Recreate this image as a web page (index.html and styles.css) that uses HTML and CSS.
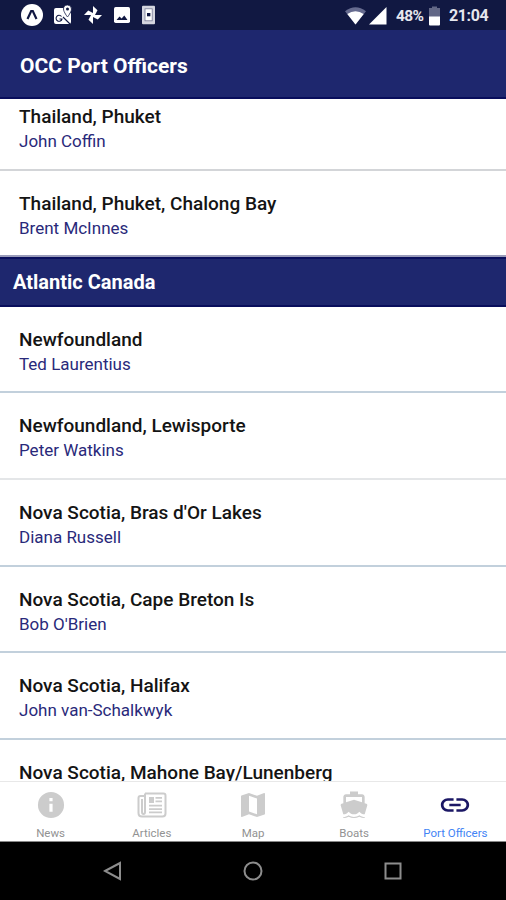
FILE: index.html
```html
<!DOCTYPE html>
<html lang="en">
<head>
<meta charset="utf-8">
<title>OCC Port Officers</title>
<link rel="stylesheet" href="styles.css">
</head>
<body>
<div class="screen">
  <div class="status">
    <div class="notices">
      <svg width="22" height="22" viewBox="0 0 22 22"><circle cx="11" cy="11" r="11" fill="#fff"/><path d="M6.5 15 10.2 7h1.6l3.7 8" fill="none" stroke="#111842" stroke-width="2.2"/></svg>
      <svg width="20" height="22" viewBox="0 0 20 22"><path d="M3 4h9l3 7 3-3v10q0 2-2 2H3q-2 0-2-2V6q0-2 2-2z" fill="#fff"/><path d="M8.5 12.5A3 3 0 1 0 9 15H6.5M10 13l7 7" fill="none" stroke="#111842" stroke-width="1.1"/><path d="M14.5 1a4 4 0 0 0-4 4c0 3 4 8 4 8s4-5 4-8a4 4 0 0 0-4-4z" fill="#fff" stroke="#111842" stroke-width=".8"/><circle cx="14.5" cy="5" r="1.5" fill="#111842"/></svg>
      <svg width="20" height="22" viewBox="0 0 20 22"><g fill="#fff"><path id="v" d="M10 11V2l4.5 4.2L12 11z"/><path d="M10 11h9l-4.2 4.5L10 13z"/><path d="M10 11v9l-4.5-4.2L8 11z"/><path d="M10 11H1l4.2-4.5L10 9z"/></g></svg>
      <svg width="18" height="22" viewBox="0 0 18 22"><rect x="1" y="3" width="16" height="16" rx="1.7" fill="#fff"/><path d="M3.5 16 6.5 12.5 8.6 14.6 11.3 11.5 14.5 16z" fill="#111842"/></svg>
      <svg width="15" height="22" viewBox="0 0 15 22"><rect x="1" y="1.7" width="13" height="18.5" rx="1" fill="#d4d5df"/><rect x="4" y="4.8" width="7.2" height="12" fill="#fff" stroke="#777b95" stroke-width=".8"/><path d="M6 9h3.4v3.3H6z" fill="#111842"/></svg>
    </div>
    <div class="system">
      <svg class="wifi" width="21" height="18" viewBox="0 0 21 18"><path d="M0 4.2Q10.5-3.9 21 4.2L10.5 17.5z" fill="#666b8f"/><path d="M2.3 7Q10.5 1.6 18.7 7l-8.2 10.5z" fill="#fff"/></svg>
      <svg class="signal" width="18" height="18" viewBox="0 0 18 18"><path d="M0 17.5 17.5 0v17.5z" fill="#fff"/></svg>
      <span class="percent">48%</span>
      <svg class="battery" width="11" height="20" viewBox="0 0 11 20"><path d="M3 .5h5V2h3v9H0V2h3z" fill="#626786"/><path d="M0 10.5h11v8q0 1-1 1H1q-1 0-1-1z" fill="#fff"/></svg>
      <span class="time">21:04</span>
    </div>
  </div>
  <header class="appbar"><h1>OCC Port Officers</h1></header>
  <main class="list">
    <div class="row"><div class="place">Thailand, Phuket</div><div class="name">John Coffin</div></div>
    <div class="row last"><div class="place">Thailand, Phuket, Chalong Bay</div><div class="name">Brent McInnes</div></div>
    <h2 class="region">Atlantic Canada</h2>
    <div class="row blue"><div class="place">Newfoundland</div><div class="name">Ted Laurentius</div></div>
    <div class="row pale"><div class="place">Newfoundland, Lewisporte</div><div class="name">Peter Watkins</div></div>
    <div class="row blue"><div class="place">Nova Scotia, Bras d'Or Lakes</div><div class="name">Diana Russell</div></div>
    <div class="row blue"><div class="place">Nova Scotia, Cape Breton Is</div><div class="name">Bob O'Brien</div></div>
    <div class="row blue"><div class="place">Nova Scotia, Halifax</div><div class="name">John van-Schalkwyk</div></div>
    <div class="row"><div class="place">Nova Scotia, Mahone Bay/Lunenberg</div></div>
  </main>
  <nav class="tabs">
    <div class="tab"><svg width="32" height="32" viewBox="0 0 24 24"><path d="M12 2.2a9.8 9.8 0 1 0 0 19.6 9.8 9.8 0 0 0 0-19.6zM13.2 17h-2.4v-6h2.4zm0-7.8h-2.4V6.8h2.4z"/></svg><span>News</span></div>
    <div class="tab"><svg width="32" height="32" viewBox="0 0 32 32"><g fill="none" stroke="#ccc" stroke-width="2"><path d="M9 4.5h18.5q2 0 2 2v18q0 3-3 3H6q-3.5 0-3.5-3.5V9q0-2 2-2H9M9 4.5V23q0 2-1.5 2T6 23V10"/></g><path d="M13 8h5v6h-5zm6.5 0H26v1.7h-6.5zm0 3.5H26v1.7h-6.5zM13 15.7h13v1.7H13zm0 3.5h13v1.7H13zm0 3.4h13v1.7H13z"/></svg><span>Articles</span></div>
    <div class="tab"><svg width="32" height="32" viewBox="0 0 24 24"><path d="M20.5 3l-.16.03L15 5.1 9 3 3.36 4.9c-.21.07-.36.25-.36.48V20.5c0 .28.22.5.5.5l.16-.03L9 18.9l6 2.1 5.64-1.9c.21-.07.36-.25.36-.48V3.500c0-.28-.22-.5-.5-.5zM15 19l-6-2.110V5l6 2.110V19z"/></svg><span>Map</span></div>
    <div class="tab"><svg width="32" height="32" viewBox="0 0 24 24"><path d="M20 21c-1.390 0-2.780-.47-4-1.320-2.440 1.710-5.560 1.710-8 0C6.780 20.530 5.390 21 4 21v.8c1.380 0 2.740-.35 4-.99 2.520 1.290 5.480 1.290 8 0 1.260.65 2.620.99 4 .99V21zM3.950 19H4c1.600 0 3.020-.88 4-2 .98 1.120 2.400 2 4 2s3.020-.88 4-2c.98 1.120 2.400 2 4 2h.05l1.890-6.680c.08-.26.06-.54-.06-.78s-.34-.42-.6-.5L20 10.620V6c0-1.100-.9-2-2-2h-3V1.800H9V4H6c-1.100 0-2 .9-2 2v4.620l-1.290.42c-.26.08-.48.26-.6.5s-.15.52-.06.78L3.950 19zM6 6h12v3.970L12 8 6 9.970V6z"/></svg><span>Boats</span></div>
    <div class="tab active"><svg width="34" height="32" viewBox="0 0 24 24" preserveAspectRatio="none"><path d="M3.900 12c0-1.710 1.390-3.100 3.100-3.100h4V7H7c-2.760 0-5 2.240-5 5s2.240 5 5 5h4v-1.900H7c-1.710 0-3.100-1.390-3.100-3.100zM8 13h8v-2H8v2zm9-6h-4v1.900h4c1.710 0 3.100 1.390 3.100 3.100s-1.390 3.100-3.100 3.100h-4V17h4c2.760 0 5-2.240 5-5s-2.240-5-5-5z"/></svg><span>Port Officers</span></div>
  </nav>
  <div class="sysnav">
    <svg width="20" height="20" viewBox="0 0 20 20"><path d="M2 10 17 2v16z"/></svg>
    <svg width="20" height="20" viewBox="0 0 20 20"><circle cx="10" cy="10" r="8.500"/></svg>
    <svg width="20" height="20" viewBox="0 0 20 20"><rect x="2.500" y="2.500" width="15" height="15"/></svg>
  </div>
</div>
</body>
</html>
```
FILE: styles.css
```css
* { box-sizing: border-box; }
body { margin: 0; font-family: Roboto, "Liberation Sans", sans-serif; background: #fff; }
.screen { width: 506px; height: 900px; display: flex; flex-direction: column; overflow: hidden; }
svg { display: block; flex: none; }
.status { height: 30px; flex: none; background: #111842; display: flex; justify-content: space-between; padding: 0 18px 0 21px; color: #e6e7ee; }
.notices { display: flex; align-items: center; gap: 10px; }
.system { display: flex; align-items: center; padding-top: 2px; font-size: 16px; font-weight: 700; line-height: 20px; }
.signal { margin-left: 3px; }
.percent { margin-left: 9px; width: 29px; font-size: 15.500px; letter-spacing: -.6px; }
.battery { margin-left: 4px; }
.time { margin-left: 9px; width: 39px; letter-spacing: -.4px; white-space: nowrap; }
.appbar { height: 69px; flex: none; background: #1e276e; border-bottom: 2px solid #090e5c; display: flex; align-items: center; padding: 4px 20px 0; }
h1 { margin: 0; color: #fff; font-size: 21px; line-height: 26px; font-weight: 700; white-space: nowrap; }
.list { flex: none; height: 682px; overflow: hidden; }
.row { height: 86.700px; padding: 21px 19px 0; border-bottom: 2px solid #d3d5d8; white-space: nowrap; }
.row:first-child { margin-top: -15.200px; }
.row.last { border-bottom-color: #9a9cba; height: 86px; }
.row.blue { border-bottom-color: #c2d0dc; }
.row.pale { border-bottom-color: #e4e6e8; }
.place { color: #141414; font-size: 19px; line-height: 24px; font-weight: 500; }
.name { color: #29297a; font-size: 17px; line-height: 24px; }
.region { margin: 0; height: 50px; background: #1e276e; border-top: 2px solid #090e5c; border-bottom: 2px solid #090e5c; padding: 0 13px; color: #fff; font-size: 20px; line-height: 47px; font-weight: 700; }
.tabs { height: 61px; flex: none; border-top: 1px solid #e8e8e8; border-bottom: 1px solid #888; display: flex; background: #fff; }
.tab { flex: 1; display: flex; flex-direction: column; align-items: center; padding-top: 7px; font-size: 11.500px; line-height: 14px; color: #929292; white-space: nowrap; }
.tab svg { fill: #ccc; }
.tab span { margin-top: 5px; }
.tab.active { color: #4384f5; }
.tab.active svg { fill: #1b1765; }
.sysnav { flex: 1; background: #000; display: flex; justify-content: center; gap: 120px; padding-top: 19px; }
.sysnav svg { fill: none; stroke: #8d8d8d; stroke-width: 2; }
```
